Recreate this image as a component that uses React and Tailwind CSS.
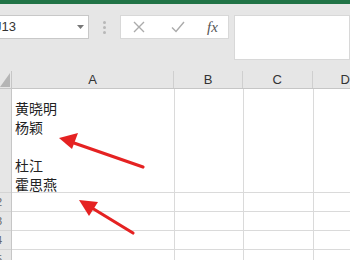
import React from "react";

export default function App() {
  const font = { fontFamily: '"Liberation Sans", "Noto Sans CJK SC", sans-serif' };
  return (
    <div className="relative w-[350px] h-[260px] overflow-hidden bg-white" style={font}>
      <div className="h-[4px] bg-[#217346]" />
      <div className="h-[67px] bg-[#e6e6e6] flex items-start pt-[11px]">
        <div className="w-[89px] h-[24px] bg-white border-y border-r border-[#c8c8c8] flex items-center relative">
          <span className="ml-[-5px] text-[13px] text-[#333]">J13</span>
          <svg className="absolute left-[77px] top-[9px]" width="7" height="5" viewBox="0 0 7 5">
            <path d="M0 0 L7 0 L3.5 4 Z" fill="#777" />
          </svg>
        </div>
        <div className="w-[31px] h-[24px] flex flex-col items-center justify-center gap-[2px]">
          <div className="w-[3px] h-[3px] rounded-full bg-[#b8b8b8]" />
          <div className="w-[3px] h-[3px] rounded-full bg-[#b8b8b8]" />
          <div className="w-[3px] h-[3px] rounded-full bg-[#b8b8b8]" />
        </div>
        <div className="w-[109px] h-[24px] bg-white border border-[#d8d8d8] flex items-center">
          <svg className="ml-[12px]" width="12" height="12" viewBox="0 0 12 12">
            <path d="M1 1 L11 11 M11 1 L1 11" stroke="#ababab" strokeWidth="1.4" />
          </svg>
          <svg className="ml-[26px]" width="14" height="12" viewBox="0 0 14 12">
            <path d="M1 6.5 L5 10.5 L13 1" stroke="#ababab" strokeWidth="1.4" fill="none" />
          </svg>
          <span className="ml-[22px] text-[15px] italic text-[#555]" style={{ fontFamily: '"Liberation Serif", serif' }}>fx</span>
        </div>
        <div className="ml-[5px] flex-1 h-[45px] bg-white border border-[#d8d8d8]" />
      </div>
      <div className="h-[18px] bg-[#e6e6e6] flex border-b border-[#c6c6c6] text-[13px] text-[#333]">
        <div className="w-[12px] border-r border-[#c6c6c6] relative">
          <svg className="absolute right-[1px] bottom-[1px]" width="10" height="14" viewBox="0 0 10 14">
            <path d="M10 0 L10 14 L0 14 Z" fill="#b5b5b5" />
          </svg>
        </div>
        <div className="w-[163px] border-r border-[#cfcfcf] flex items-center justify-center">A</div>
        <div className="w-[69px] border-r border-[#cfcfcf] flex items-center justify-center">B</div>
        <div className="w-[70px] border-r border-[#cfcfcf] flex items-center justify-center">C</div>
        <div className="flex-1 flex items-center pl-[28px]">D</div>
      </div>
      <div className="flex">
        <div className="w-[12px] bg-[#e6e6e6] border-r border-[#c6c6c6] flex flex-col text-[11px] text-[#666] overflow-hidden">
          <div className="h-[104px] border-b border-[#d4d4d4]" />
          {["2", "3", "4", "5"].map((n) => (
            <div key={n} className="h-[19px] border-b border-[#d4d4d4] flex items-center">
              <span className="ml-[-4px]">{n}</span>
            </div>
          ))}
        </div>
        <div className="flex-1 flex">
          {[163, 69, 70, 0].map((w, i) => (
            <div
              key={i}
              className={i < 3 ? "border-r border-[#dadada] flex flex-col" : "flex-1 flex flex-col"}
              style={i < 3 ? { width: w } : undefined}
            >
              <div className="h-[104px] border-b border-[#dadada] pt-[10px] pl-[3px]">
                {i === 0 && (
                  <div className="text-[14px] leading-[19px] text-[#222]" style={{ fontFamily: '"Noto Sans CJK SC", sans-serif' }}>
                    <div>黄晓明</div>
                    <div>杨颖</div>
                    <div>&nbsp;</div>
                    <div>杜江</div>
                    <div>霍思燕</div>
                  </div>
                )}
              </div>
              {[0, 1, 2, 3].map((r) => (
                <div key={r} className="h-[19px] border-b border-[#dadada]" />
              ))}
            </div>
          ))}
        </div>
      </div>
      <svg className="absolute left-0 top-0" width="350" height="260" viewBox="0 0 350 260">
        <path d="M143 167 L74 143" stroke="#e52222" strokeWidth="3.2" strokeLinecap="round" />
        <path d="M59 138 L78 133 L72 149 Z" fill="#e52222" />
        <path d="M133 233 L92 208" stroke="#e52222" strokeWidth="3.2" strokeLinecap="round" />
        <path d="M79 200 L98 202 L89 216 Z" fill="#e52222" />
      </svg>
    </div>
  );
}
